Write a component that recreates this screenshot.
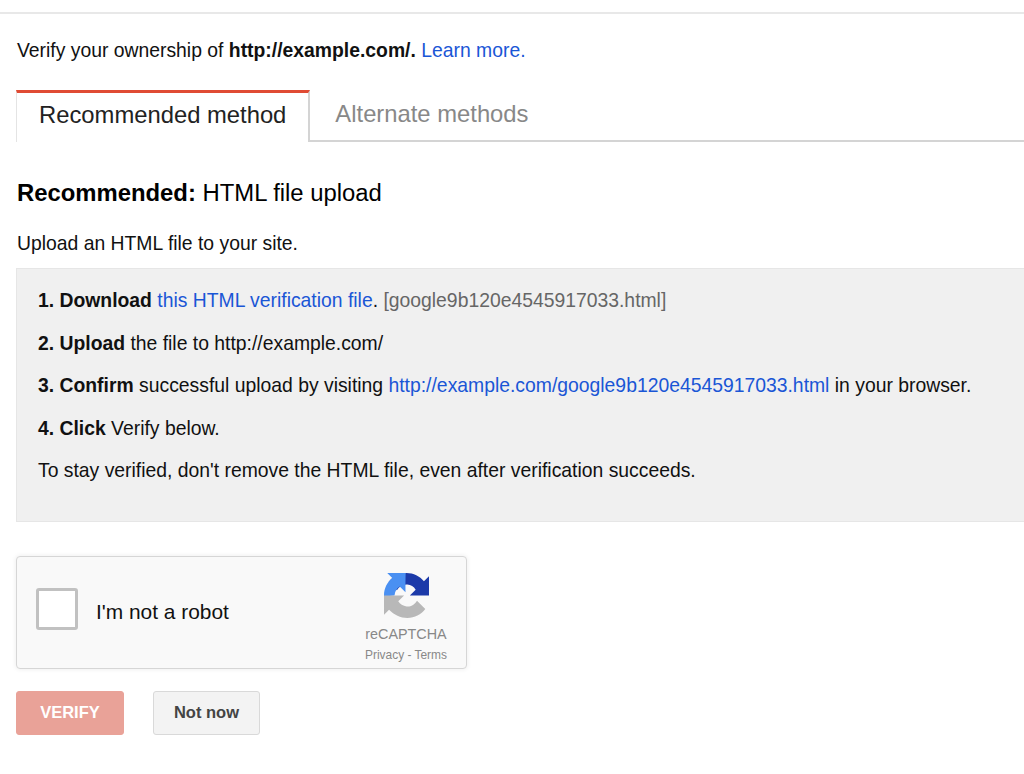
<script>
  const steps = [
    { n: "1.", verb: "Download" },
    { n: "2.", verb: "Upload" },
    { n: "3.", verb: "Confirm" },
    { n: "4.", verb: "Click" },
  ];
</script>

<style>
  :global(body) {
    background: #fff;
    font-family: "Liberation Sans", Arial, sans-serif;
    color: #111;
    overflow: hidden;
  }
  .page {
    height: 774px;
    overflow: hidden;
    padding-top: 12px;
    box-sizing: border-box;
  }
  .topline {
    height: 2px;
    background: #e8e8e8;
  }
  .intro {
    margin: 25px 0 0 17px;
    font-size: 19.35px;
    line-height: 22px;
  }
  a {
    color: #1a56d6;
    text-decoration: none;
  }
  .tabs {
    display: flex;
    margin: 29px 0 0 16px;
    height: 52px;
    border-bottom: 2px solid #d4d4d4;
    box-sizing: border-box;
    font-size: 23.8px;
  }
  .tab {
    display: flex;
    align-items: center;
    box-sizing: border-box;
  }
  .tab.active {
    height: 52px;
    background: #fff;
    color: #222;
    border-top: 3px solid #e04b34;
    border-left: 1px solid #e4e4e4;
    border-right: 2px solid #d4d4d4;
    padding: 0 22px 6px;
  }
  .tab.other {
    color: #888;
    padding: 0 0 2px 25px;
  }
  h2 {
    margin: 37px 0 0 17px;
    font-size: 23.85px;
    line-height: 28px;
    font-weight: 400;
    color: #000;
  }
  .sub {
    margin: 25px 0 0 17px;
    font-size: 19.35px;
    line-height: 22px;
  }
  .box {
    margin: 14px 0 0 16px;
    height: 254px;
    box-sizing: border-box;
    background: #f0f0f0;
    border: 1px solid #e6e6e6;
    border-right: 0;
    padding: 20px 0 0 21px;
    font-size: 19.35px;
    line-height: 22px;
  }
  .box p {
    margin: 0 0 20.5px;
    white-space: nowrap;
  }
  .grey {
    color: #666;
  }
  .captcha {
    display: flex;
    align-items: center;
    margin: 34px 0 0 16px;
    width: 451px;
    height: 113px;
    box-sizing: border-box;
    background: #f9f9f9;
    border: 1px solid #d6d6d6;
    border-radius: 4px;
    box-shadow: 0 0 4px 1px rgba(0, 0, 0, 0.06);
    padding-left: 19px;
  }
  .check {
    width: 42px;
    height: 42px;
    box-sizing: border-box;
    background: #fff;
    border: 3px solid #c1c1c1;
    border-radius: 3px;
    margin-bottom: 7px;
  }
  .label {
    margin: 0 0 2px 18px;
    font-size: 20.9px;
    flex: 1;
    color: #111;
  }
  .brand {
    display: flex;
    flex-direction: column;
    align-items: center;
    align-self: flex-start;
    width: 100px;
    margin-right: 10px;
    padding-top: 16px;
    color: #888;
  }
  .brand svg {
    display: block;
  }
  .brand .name {
    margin-top: 7px;
    font-size: 14.35px;
    line-height: 18px;
  }
  .brand .terms {
    margin-top: 5px;
    font-size: 11.95px;
    line-height: 14px;
  }
  .actions {
    display: flex;
    gap: 29px;
    margin: 22px 0 0 16px;
  }
  .btn {
    height: 44px;
    box-sizing: border-box;
    border-radius: 3px;
    font-family: inherit;
    font-size: 16.5px;
    font-weight: 700;
    padding: 0 0 2px;
  }
  .verify {
    width: 108px;
    background: #e9a298;
    border: 1px solid #e9a298;
    color: #fff;
  }
  .later {
    width: 107px;
    background: #f3f3f3;
    border: 1px solid #d9d9d9;
    color: #444;
  }
</style>

<div class="page">
  <div class="topline"></div>
  <p class="intro">Verify your ownership of <b>http://example.com/.</b> <a href="#top">Learn more.</a></p>
  <div class="tabs">
    <div class="tab active">Recommended method</div>
    <div class="tab other">Alternate methods</div>
  </div>
  <h2><b>Recommended:</b> HTML file upload</h2>
  <p class="sub">Upload an HTML file to your site.</p>
  <div class="box">
    <p><b>{steps[0].n} {steps[0].verb}</b> <a href="#top">this HTML verification file</a>. <span class="grey">[google9b120e4545917033.html]</span></p>
    <p><b>{steps[1].n} {steps[1].verb}</b> the file to http://example.com/</p>
    <p><b>{steps[2].n} {steps[2].verb}</b> successful upload by visiting <a href="#top">http://example.com/google9b120e4545917033.html</a> in your browser.</p>
    <p><b>{steps[3].n} {steps[3].verb}</b> Verify below.</p>
    <p>To stay verified, don't remove the HTML file, even after verification succeeds.</p>
  </div>
  <div class="captcha">
    <div class="check"></div>
    <p class="label">I'm not a robot</p>
    <div class="brand">
      <svg width="45" height="45" viewBox="0 0 64 64" aria-hidden="true">
        <path fill="#1c3aa9" d="M64 31.955l-.033-1.37V4.687l-7.16 7.16C50.948 4.674 42.033.093 32.05.093c-10.4 0-19.622 4.96-25.458 12.64l11.736 11.86c1.15-2.127 2.784-3.954 4.75-5.33 2.05-1.6 4.952-2.908 8.973-2.908.486 0 .86.057 1.135.163 4.983.393 9.3 3.143 11.844 7.135l-8.307 8.307c10.52-.04 22.4-.066 27.77.001" />
        <path fill="#4a90f2" d="M31.862.094l-1.37.033H4.594l7.16 7.16C4.58 13.147 0 22.06 0 32.046c0 .486.014 .97.04 1.45l14.96-1.45c0-.486.057-.86.163-1.135.393-4.983 3.143-9.3 7.135-11.844l8.307 8.307c-.04-10.52-.066-22.4.257-27.28" />
        <path fill="#b8b8b8" d="M.001 32.045l.033 1.37v25.898l7.16-7.16c7.147 7.173 16.06 11.754 26.045 11.754 10.4 0 19.622-4.96 25.458-12.64L46.96 39.407c-1.15 2.127-2.784 3.954-4.75 5.33-2.05 1.6-4.952 2.908-8.973 2.908-.486 0-.86-.057-1.135-.163-4.983-.393-9.3-3.143-11.844-7.135l8.307-8.307c-10.52.04-22.4.066-27.77-.001" />
      </svg>
      <div class="name">reCAPTCHA</div>
      <div class="terms">Privacy - Terms</div>
    </div>
  </div>
  <div class="actions">
    <button class="btn verify">VERIFY</button>
    <button class="btn later">Not now</button>
  </div>
</div>
